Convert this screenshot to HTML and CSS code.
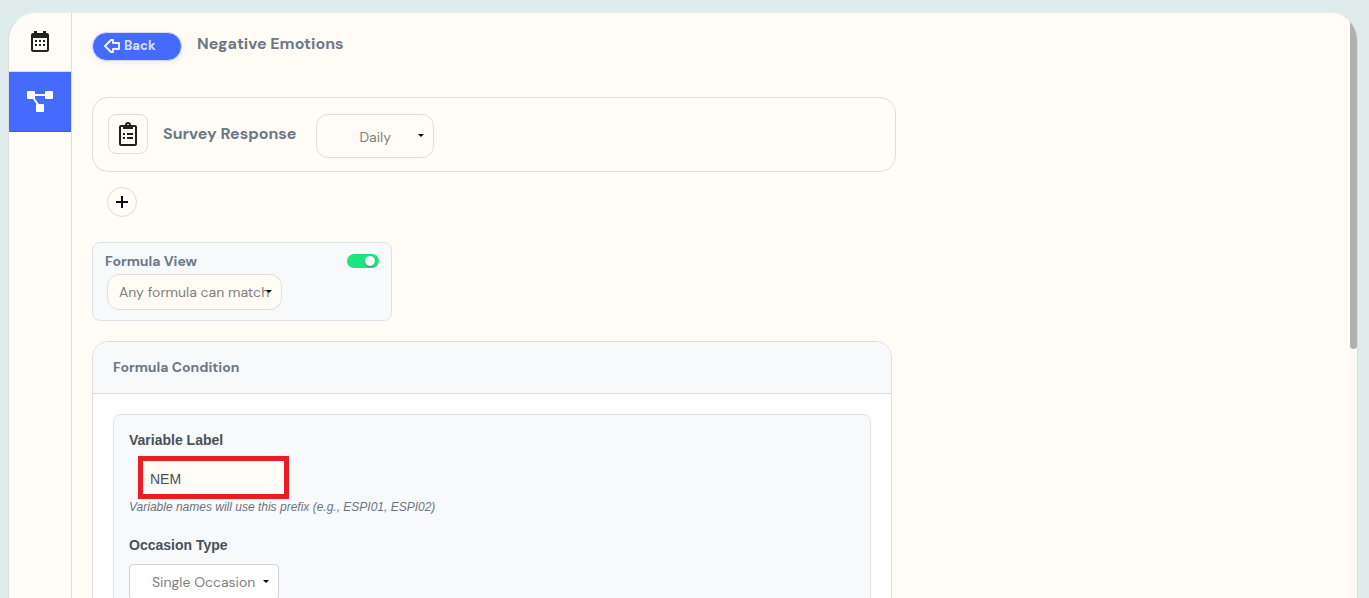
FILE: index.html
```html
<!DOCTYPE html>
<html lang="en">
<head>
    <meta charset="UTF-8">
    <meta name="viewport" content="width=device-width, initial-scale=1.0">
    <title>Negative Emotions</title>
    <link rel="stylesheet" href="styles.css">
</head>
<body>
    <div class="main-container">
        <nav class="sidebar">
            <a href="#calendar" class="tab" aria-label="Calendar">
                <svg width="20" height="22" viewBox="0 0 20 22">
                    <path fill="#212121" fill-rule="evenodd" d="M4 0h3v2h6V0h3v2h1a2 2 0 0 1 2 2v15a2 2 0 0 1-2 2H3a2 2 0 0 1-2-2V4a2 2 0 0 1 2-2h1zM3 7v12h14V7z"/>
                    <path fill="#212121" d="M5 9h2v2H5zM9 9h2v2H9zM13 9h2v2h-2zM5 13h2v2H5zM9 13h2v2H9zM13 13h2v2h-2z"/>
                </svg>
            </a>
            <a href="#flow" class="tab active" aria-label="Flow">
                <svg width="26" height="22" viewBox="0 0 26 22">
                    <path stroke="#fff" stroke-width="2" fill="none" d="M5 4h16M5 5l7 10"/>
                    <g fill="#fff">
                        <rect x="0" y="0" width="8" height="8" rx="1"/>
                        <rect x="18" y="0" width="8" height="8" rx="1"/>
                        <rect x="9" y="13" width="8" height="8" rx="1"/>
                    </g>
                </svg>
            </a>
        </nav>

        <main class="content">
            <div class="page-header">
                <button type="button" class="back-btn">
                    <svg width="16" height="16" viewBox="0 0 16 16">
                        <path fill="none" stroke="#eef1ff" stroke-width="2" stroke-linejoin="round" d="M1 8l6-6h2v3h6v6H9v3H7z"/>
                    </svg>
                    Back
                </button>
                <h1>Negative Emotions</h1>
            </div>

            <section class="survey">
                <span class="survey-icon">
                    <svg width="20" height="24" viewBox="0 0 20 24">
                        <path fill="none" stroke="#212121" stroke-width="2" d="M3 4h14q1 0 1 1v17q0 1-1 1H3q-1 0-1-1V5q0-1 1-1z"/>
                        <path fill="#212121" fill-rule="evenodd" d="M5 3h2a3 3 0 0 1 6 0h2v4H5zM10 2a1 1 0 1 0 0 2 1 1 0 0 0 0-2z"/>
                        <path fill="#212121" d="M5 11h2v2H5zM9 11h6v2H9zM5 15h2v2H5zM9 15h6v2H9z"/>
                    </svg>
                </span>
                <label for="frequency">Survey Response</label>
                <span class="select-box frequency">
                    <select id="frequency">
                        <option>Daily</option>
                        <option>Weekly</option>
                    </select>
                </span>
            </section>

            <button type="button" class="add-btn" aria-label="Add">
                <svg width="12" height="12" viewBox="0 0 12 12">
                    <path stroke="#0b0b22" stroke-width="2" d="M6 0v12M0 6h12"/>
                </svg>
            </button>

            <section class="formula-view">
                <div class="formula-view-row">
                    <label for="formula-toggle">Formula View</label>
                    <input type="checkbox" class="toggle" id="formula-toggle" checked>
                </div>
                <span class="select-box match">
                    <select aria-label="Formula match">
                        <option>Any formula can match</option>
                        <option>All formulas must match</option>
                    </select>
                </span>
            </section>

            <section class="condition">
                <h2>Formula Condition</h2>
                <div class="condition-body">
                    <div class="variable">
                        <label for="variable-label">Variable Label</label>
                        <input type="text" class="variable-input" id="variable-label" value="NEM">
                        <p class="hint">Variable names will use this prefix (e.g., ESPI01, ESPI02)</p>
                        <label for="occasion">Occasion Type</label>
                        <span class="select-box occasion">
                            <select id="occasion">
                                <option>Single Occasion</option>
                                <option>Multiple Occasions</option>
                            </select>
                        </span>
                    </div>
                </div>
            </section>
        </main>
        <div class="scroll-thumb"></div>
    </div>
</body>
</html>
```

FILE: styles.css
```css
* {
    box-sizing: border-box;
}
body {
    margin: 0;
    padding: 12px 11px 0 8px;
    height: 100vh;
    overflow: hidden;
    background-color: #deecec;
    font-family: "DM Sans", Inter, sans-serif;
    font-size: 14px;
    color: #6c7887;
}
button, select, input {
    font-family: inherit;
    margin: 0;
}
svg {
    display: block;
}
.main-container {
    position: relative;
    display: flex;
    height: 100%;
    overflow: hidden;
    background-color: #fffcf5;
    border: 1px solid #dddddd;
    border-top-color: #f0eee8;
    border-bottom: 0;
    border-radius: 28px 28px 0 0;
}
.sidebar {
    flex: none;
    width: 63px;
    border-right: 1px solid #dddddd;
}
.tab {
    display: flex;
    align-items: center;
    justify-content: center;
    height: 59px;
    border-bottom: 1px solid #dddddd;
}
.tab.active {
    height: 60px;
    background-color: #456afe;
    border-color: #3d5de0;
}
.content {
    flex: 1;
    padding: 19px 20px 0;
}
.page-header {
    display: flex;
    gap: 15px;
    height: 65px;
}
.page-header h1 {
    margin: 0;
    font-size: 16px;
    font-weight: 700;
    line-height: 24px;
}
.back-btn {
    display: flex;
    align-items: center;
    gap: 4px;
    width: 90px;
    height: 29px;
    padding: 0 11px 2px;
    border: 1px solid #d5dbf8;
    border-radius: 15px;
    background-color: #456afe;
    color: #d9e0ff;
    font-size: 13px;
    font-weight: 800;
    box-shadow: 0 2px 6px rgba(69, 106, 254, 0.1);
}
.survey {
    display: flex;
    align-items: flex-start;
    width: 804px;
    max-width: 100%;
    height: 75px;
    padding: 16px 15px 0;
    border: 1px solid #dddddd;
    border-radius: 16px;
}
.survey-icon {
    display: flex;
    align-items: center;
    justify-content: center;
    width: 40px;
    height: 40px;
    border: 1px solid #dddddd;
    border-radius: 8px;
}
.survey label {
    margin: 0 20px 0 15px;
    font-size: 16px;
    font-weight: 700;
    line-height: 40px;
}
.select-box {
    position: relative;
    display: block;
}
.select-box select {
    appearance: none;
    display: block;
    width: 100%;
    height: 100%;
    border: 1px solid #dddddd;
    border-radius: 12px;
    background-color: #fffcf5;
    color: #808080;
    font-size: 14px;
}
.select-box::after {
    content: "";
    position: absolute;
    top: 50%;
    right: 10px;
    margin-top: -2px;
    border: 3px solid transparent;
    border-top-color: #000;
    border-bottom: 0;
}
.frequency {
    width: 118px;
    height: 44px;
}
.frequency select {
    padding: 2px 20px 0 42px;
}
.add-btn {
    display: flex;
    align-items: center;
    justify-content: center;
    width: 30px;
    height: 30px;
    margin: 15px 0 25px 15px;
    padding: 0;
    border: 1px solid #dddddd;
    border-radius: 50%;
    background: none;
}
.formula-view {
    width: 300px;
    height: 79px;
    padding: 8px 12px;
    border: 1px solid #dee2e6;
    border-radius: 8px;
    background-color: #f8f9fb;
}
.formula-view-row {
    display: flex;
    align-items: center;
    justify-content: space-between;
    height: 20px;
    margin-bottom: 3px;
    font-weight: 700;
}
.toggle {
    appearance: none;
    display: flex;
    align-items: center;
    justify-content: flex-end;
    width: 32px;
    height: 14px;
    padding: 0 4px;
    border-radius: 7px;
    background-color: #1be57f;
}
.toggle::before {
    content: "";
    width: 10px;
    height: 10px;
    border-radius: 50%;
    background-color: #fff;
    box-shadow: 0 1px 2px rgba(0, 0, 0, 0.3);
}
.toggle:not(:checked) {
    justify-content: flex-start;
    background-color: #c4c8cc;
}
.match {
    width: 175px;
    height: 36px;
    margin-left: 2px;
}
.match select {
    padding: 0 8px 0 11px;
}
.condition {
    width: 800px;
    max-width: 100%;
    margin-top: 20px;
    border: 1px solid #dddddd;
    border-radius: 16px;
    overflow: hidden;
    background-color: #fff;
}
.condition h2 {
    margin: 0;
    padding: 15px 20px 16px;
    border-bottom: 1px solid #dddddd;
    background-color: #f8f9fb;
    font-size: 14px;
    font-weight: 700;
    line-height: 20px;
}
.condition-body {
    padding: 20px;
}
.variable {
    padding: 15px;
    border: 1px solid #dee2e6;
    border-radius: 8px;
    background-color: #f8f9fb;
    font-family: "Liberation Sans", Arial, sans-serif;
}
.variable label {
    display: block;
    color: #495057;
    font-weight: 700;
    line-height: 20px;
}
.variable-input {
    display: block;
    width: 151px;
    height: 43px;
    margin: 6px 0 0 9px;
    padding: 2px 7px 0;
    border: 5px solid #ed1c24;
    background-color: #fffcf5;
    color: #495057;
    font-size: 14px;
}
.hint {
    margin: 0 0 20px;
    color: #6c757d;
    font-size: 12px;
    font-style: italic;
    line-height: 16px;
}
.occasion {
    width: 150px;
    height: 36px;
    margin-top: 9px;
    font-family: "DM Sans", Inter, sans-serif;
}
.occasion select {
    padding: 0 16px 0 22px;
    border-color: #ced4da;
    border-radius: 4px;
    background-color: #fff;
}
.scroll-thumb {
    position: absolute;
    top: 0;
    right: 0;
    width: 7px;
    height: 336px;
    border-radius: 0 0 4px 4px;
    background-color: #b0b0b0;
}
```
